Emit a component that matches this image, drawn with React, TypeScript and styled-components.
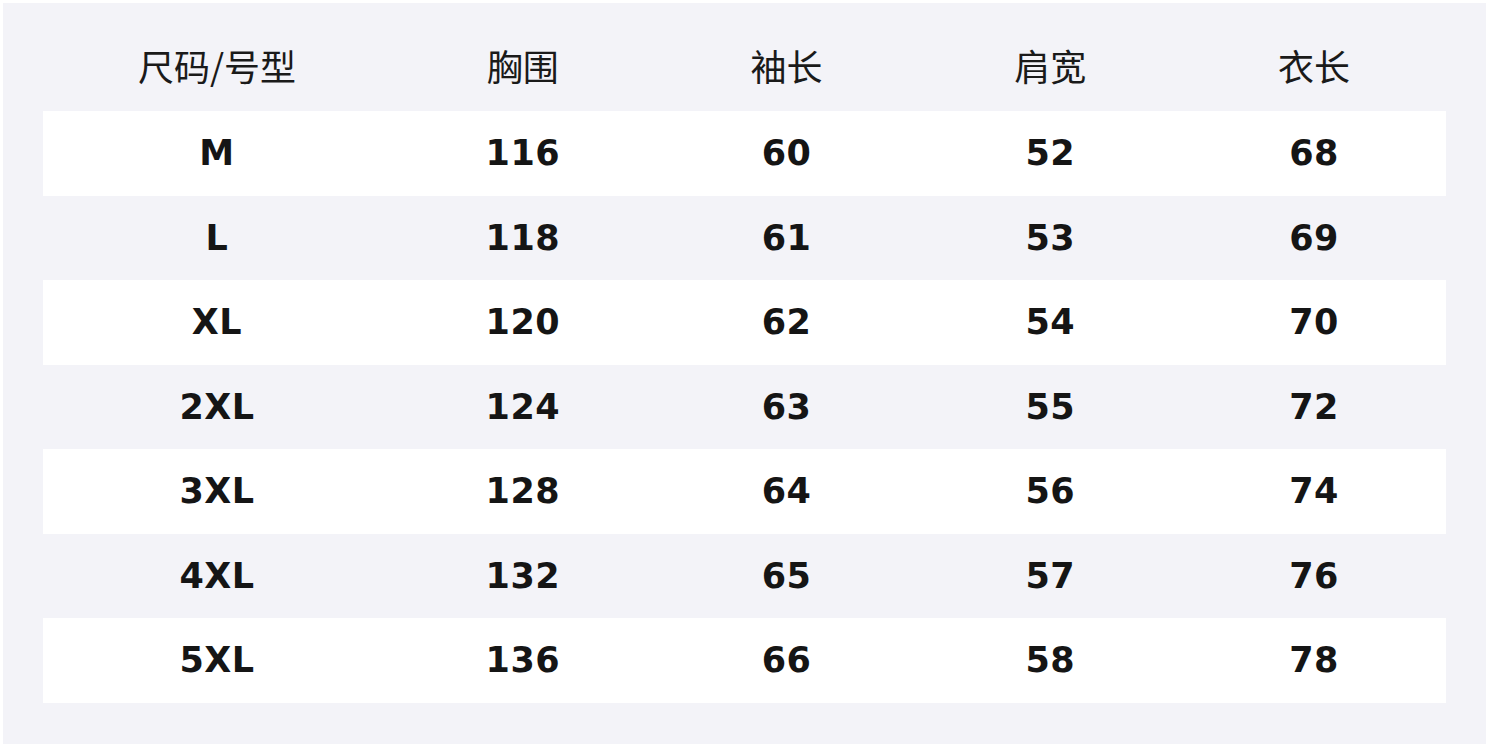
import React from "react";
import styled, { createGlobalStyle } from "styled-components";

const Global = createGlobalStyle`
  html, body { margin: 0; padding: 0; background: #ffffff; }
  body { font-family: "DejaVu Sans", "Noto Sans CJK SC", sans-serif; }
`;

const Panel = styled.div`
  margin: 3px;
  width: 1483px;
  height: 741px;
  box-sizing: border-box;
  background: #f3f3f8;
  padding: 20px 40px 0 40px;
`;

const Grid = styled.div`
  display: grid;
  grid-template-columns: 348px repeat(4, 1fr);
  grid-template-rows: 88px repeat(7, 84.5px);
  width: 1403px;
`;

const HeadCell = styled.div`
  display: flex;
  align-items: center;
  justify-content: center;
  padding-bottom: 4px;
  font-family: "Noto Sans CJK SC", "Noto Sans", sans-serif;
  font-size: 36px;
  font-weight: 400;
  color: #1a1a1a;
`;

const Row = styled.div<{ $white: boolean }>`
  display: contents;
  & > div {
    background: ${(p) => (p.$white ? "#ffffff" : "transparent")};
  }
`;

const Cell = styled.div`
  display: flex;
  align-items: center;
  justify-content: center;
  font-family: "DejaVu Sans", sans-serif;
  font-weight: 700;
  font-size: 35px;
  color: #151515;
  letter-spacing: 0.5px;
`;

const headers = ["尺码/号型", "胸围", "袖长", "肩宽", "衣长"];
const rows = [
  ["M", "116", "60", "52", "68"],
  ["L", "118", "61", "53", "69"],
  ["XL", "120", "62", "54", "70"],
  ["2XL", "124", "63", "55", "72"],
  ["3XL", "128", "64", "56", "74"],
  ["4XL", "132", "65", "57", "76"],
  ["5XL", "136", "66", "58", "78"],
];

export default function App() {
  return (
    <>
      <Global />
      <Panel>
        <Grid>
          {headers.map((h) => (
            <HeadCell key={h}>{h}</HeadCell>
          ))}
          {rows.map((r, i) => (
            <Row key={r[0]} $white={i % 2 === 0}>
              {r.map((c, j) => (
                <Cell key={j}>{c}</Cell>
              ))}
            </Row>
          ))}
        </Grid>
      </Panel>
    </>
  );
}
